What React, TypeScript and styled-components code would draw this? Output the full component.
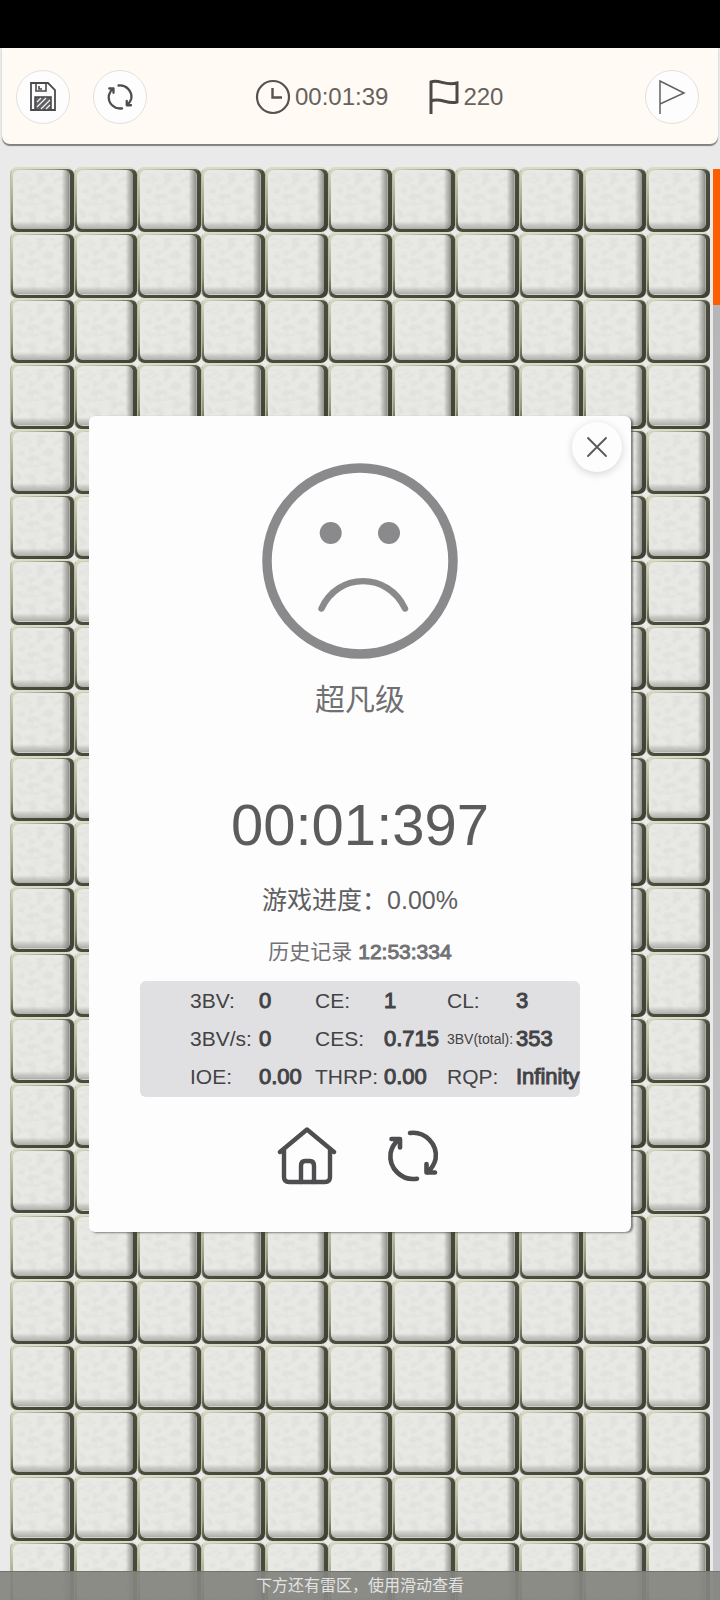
import React from 'react';
import styled, { createGlobalStyle } from 'styled-components';

const COLUMNS = 11;
const ROWS = 22;

const GlobalStyle = createGlobalStyle`
  *, *::before, *::after { box-sizing: border-box; }
  body {
    margin: 0;
    background: #eaeaec;
    font-family: "Liberation Sans", "Noto Sans CJK SC", sans-serif;
  }
  button { font: inherit; color: inherit; cursor: pointer; }
`;

const Screen = styled.div`
  position: relative;
  display: flex;
  flex-direction: column;
  height: 100vh;
  overflow: hidden;
  background: #eaeaea;
`;

const StatusBar = styled.div`
  flex: none;
  height: 48px;
  background: #000;
`;

const Header = styled.header`
  flex: none;
  display: flex;
  align-items: center;
  height: 96px;
  margin: 0 2px;
  padding: 2px 19px 0 14px;
  border-radius: 0 0 8px 8px;
  background: #fffbf4;
  box-shadow: 0 2px 1px #80807c;
`;

const HeaderSide = styled.div<{ $end?: boolean }>`
  flex: ${(p) => (p.$end ? 9 : 11)} 0 0;
  display: flex;
  gap: 23px;
  justify-content: ${(p) => (p.$end ? 'flex-end' : 'flex-start')};
`;

const HeaderStats = styled.div`
  display: flex;
  align-items: center;
  gap: 40px;
`;

const HeaderStat = styled.div`
  display: flex;
  align-items: center;
  gap: 4px;
  font-size: 24px;
  line-height: 36px;
  color: #65625f;
`;

const RoundButton = styled.button<{ $size: number; $raised?: boolean }>`
  display: flex;
  align-items: center;
  justify-content: center;
  width: ${(p) => p.$size}px;
  height: ${(p) => p.$size}px;
  padding: 0;
  border: ${(p) => (p.$raised ? 'none' : '1px solid #e3e1dd')};
  border-radius: 50%;
  background: #fdfdfe;
  box-shadow: ${(p) => (p.$raised ? '0 2px 8px rgba(0, 0, 0, 0.16)' : 'none')};
`;

const Board = styled.main`
  flex: 1;
  display: flex;
  min-height: 0;
  padding: 23px 0 0 10px;
  overflow: hidden;
`;

const Grid = styled.div`
  flex: 1;
  align-self: flex-start;
  display: grid;
  grid-template-columns: repeat(${COLUMNS}, 1fr);
`;

const Tile = styled.button`
  display: flex;
  aspect-ratio: 36 / 37;
  min-width: 0;
  padding: 1px 4px 3px 2px;
  border: 0;
  border-top: 2px solid #dadac8;
  border-left: 1px solid #b9b9a0;
  border-radius: 7px;
  background: linear-gradient(135deg, #dcdcc4 0%, #96967c 35%, #4b4d3f 50%, #3f4136 100%);
`;

const TileFace = styled.span`
  flex: 1;
  display: flex;
  overflow: hidden;
  border-radius: 6px;
  background: #e8e9e5;
`;

const TileTexture = styled.svg`
  width: 100%;
  height: 100%;
`;

const ScrollTrack = styled.div`
  flex: none;
  width: 7px;
  margin: 2px 0 0 3px;
  background: linear-gradient(#b4b4b6, #c8c8cc);
`;

const ScrollThumb = styled.div`
  height: 136px;
  background: #ff5e00;
`;

const Hint = styled.footer`
  position: absolute;
  inset: auto 0 0 0;
  padding: 4px 0;
  border-top: 1px solid #737370;
  background: rgba(132, 132, 128, 0.93);
  color: #e2e2e0;
  font-size: 16px;
  line-height: 20px;
  text-align: center;
`;

const Overlay = styled.div`
  position: absolute;
  inset: 48px 0 0 0;
  display: flex;
  align-items: center;
  justify-content: center;
`;

const Dialog = styled.section`
  position: relative;
  display: flex;
  flex-direction: column;
  align-items: center;
  width: calc(100% - 178px);
  padding: 47px 51px 46px;
  border-radius: 6px;
  background: #fdfdfe;
  box-shadow: 2px 1px 2px rgba(60, 60, 60, 0.6);
`;

const CloseSlot = styled.div`
  position: absolute;
  top: 6px;
  right: 9px;
`;

const Level = styled.h1`
  margin: 23px 0 0;
  font-size: 30px;
  font-weight: 400;
  line-height: 36px;
  color: #707072;
`;

const FinalTime = styled.p`
  margin: 75px 0 0;
  font-size: 58px;
  line-height: 64px;
  color: #5c5c5d;
`;

const Progress = styled.p`
  margin: 25px 0 0;
  font-size: 25px;
  line-height: 36px;
  color: #5f5f60;
`;

const History = styled.p`
  margin: 20px 0 0;
  font-size: 21px;
  line-height: 28px;
  color: #727274;
`;

const Strong = styled.b`
  font-weight: 400;
  -webkit-text-stroke: 1px currentColor;
`;

const StatsPanel = styled.div`
  align-self: stretch;
  margin-top: 15px;
  padding: 1px 0 1px 50px;
  border-radius: 6px;
  background: #e0e0e2;
`;

const StatsTable = styled.table`
  width: 100%;
  table-layout: fixed;
  border-collapse: collapse;
  white-space: nowrap;
  text-align: left;
  color: #434345;
`;

const LabelCell = styled.th<{ $small?: boolean }>`
  height: 38px;
  padding: 0;
  font-size: ${(p) => (p.$small ? 14 : 21)}px;
  font-weight: 400;
  line-height: 24px;
`;

const ValueCell = styled.td`
  height: 38px;
  padding: 0;
  font-size: 22px;
  line-height: 24px;
`;

const Actions = styled.div`
  display: flex;
  gap: 46px;
  margin-top: 29px;
`;

const ActionButton = styled.button`
  display: flex;
  padding: 0;
  border: 0;
  background: none;
`;

const stats = [
  [['3BV:', '0'], ['CE:', '1'], ['CL:', '3']],
  [['3BV/s:', '0'], ['CES:', '0.715'], ['3BV(total):', '353']],
  [['IOE:', '0.00'], ['THRP:', '0.00'], ['RQP:', 'Infinity']],
];

const SaveIcon = () => (
  <svg width="26" height="30" viewBox="0 0 26 30" fill="none" stroke="#4b4b4d" strokeWidth="1.8">
    <path d="M1 1H18L25 8V28H1Z" />
    <path d="M6 1V9H16V1M9 4V7H12" strokeWidth="1.6" />
    <rect x="5" y="15" width="16" height="13" fill="#626264" strokeWidth="1.6" />
    <path d="M7 20L11 16M7 25L16 16M11 27L20 18M16 27L20 23" stroke="#f4f4f4" strokeWidth="1.2" />
  </svg>
);

const RestartIcon = ({ size }: { size: number }) => (
  <svg width={size} height={size} viewBox="0 0 60 60" fill="none" stroke="#4e4e50" strokeWidth="4.6" strokeLinecap="round" strokeLinejoin="round">
    <path d="M27 7A22.900 22.900 0 0 1 52.600 33Q51 40 44.500 46.500M43.500 38V46.500H52" />
    <path d="M34 52.700A22.900 22.900 0 0 1 7.600 27Q9 19.500 15.500 13.500M8.500 13H17V21.500" />
  </svg>
);

const ClockIcon = () => (
  <svg width="36" height="36" viewBox="0 0 36 36" fill="none" stroke="#55524f" strokeWidth="2.2">
    <circle cx="18" cy="18" r="16" />
    <path d="M17.500 9V18.500H27" strokeWidth="2.4" />
  </svg>
);

const FlagIcon = () => (
  <svg width="31" height="36" viewBox="0 0 31 36" fill="none" stroke="#4c4946" strokeWidth="3">
    <path d="M3 35V3C11 0 17 7 29 4V23C19 26 13 18 3 22" />
  </svg>
);

const PennantIcon = () => (
  <svg width="28" height="36" viewBox="0 0 28 36" fill="none" stroke="#626264" strokeWidth="1.5">
    <path d="M2 35V2L26 14L2 25" />
  </svg>
);

const CloseIcon = () => (
  <svg width="24" height="24" viewBox="0 0 24 24" stroke="#58585a" strokeWidth="1.8" strokeLinecap="round">
    <path d="M3 3L21 21M21 3L3 21" />
  </svg>
);

const SadFace = () => (
  <svg width="196" height="196" viewBox="0 0 196 196" fill="none" stroke="#8a8a8c" aria-hidden="true">
    <circle cx="98" cy="98" r="93" strokeWidth="9.500" />
    <g fill="#8a8a8c" stroke="none">
      <circle cx="68.700" cy="70" r="11" />
      <circle cx="127" cy="70" r="11" />
    </g>
    <path d="M59.500 145.500C76 109 126 109 143 145.500" strokeWidth="6.400" strokeLinecap="round" />
  </svg>
);

const HomeIcon = () => (
  <svg width="60" height="60" viewBox="0 0 60 60" fill="none" stroke="#4e4e50" strokeWidth="4.4" strokeLinecap="round" strokeLinejoin="round">
    <path d="M3 26L30 3.500L57 26M7 23V51Q7 56 12 56H48Q53 56 53 51V23" />
    <path d="M24 56V40Q24 35 28 35H33Q37 35 37 40V56" />
  </svg>
);

const StoneDefs = () => (
  <svg width="0" height="0" style={{ position: 'absolute' }} aria-hidden="true">
    <defs>
      <filter id="stone" x="0" y="0" width="100%" height="100%">
        <feTurbulence type="fractalNoise" baseFrequency="0.12 0.17" numOctaves={2} seed={4} />
        <feColorMatrix values="0 0 0 0 0.72  0 0 0 0 0.73  0 0 0 0 0.71  4 0 0 0 -1.7" />
      </filter>
      <linearGradient id="shadeRight" x1="0" x2="1" y1="0" y2="0">
        <stop offset="0.86" stopColor="#70716a" stopOpacity="0" />
        <stop offset="1" stopColor="#70716a" stopOpacity="0.8" />
      </linearGradient>
      <linearGradient id="shadeBottom" x1="0" x2="0" y1="0" y2="1">
        <stop offset="0.86" stopColor="#77786f" stopOpacity="0" />
        <stop offset="1" stopColor="#77786f" stopOpacity="0.55" />
      </linearGradient>
    </defs>
  </svg>
);

const Stone = () => (
  <Tile aria-label="未翻开">
    <TileFace>
      <TileTexture viewBox="0 0 58 58" preserveAspectRatio="none">
        <rect x="3" y="3" width="51" height="51" filter="url(#stone)" opacity="0.6" />
        <rect width="58" height="58" fill="url(#shadeRight)" />
        <rect width="58" height="58" fill="url(#shadeBottom)" />
      </TileTexture>
    </TileFace>
  </Tile>
);

export default function App() {
  return (
    <Screen>
      <GlobalStyle />
      <StoneDefs />
      <StatusBar />
      <Header>
        <HeaderSide>
          <RoundButton $size={54} aria-label="保存"><SaveIcon /></RoundButton>
          <RoundButton $size={54} aria-label="重新开始"><RestartIcon size={30} /></RoundButton>
        </HeaderSide>
        <HeaderStats>
          <HeaderStat><ClockIcon />00:01:39</HeaderStat>
          <HeaderStat><FlagIcon />220</HeaderStat>
        </HeaderStats>
        <HeaderSide $end>
          <RoundButton $size={54} aria-label="插旗"><PennantIcon /></RoundButton>
        </HeaderSide>
      </Header>
      <Board>
        <Grid>
          {Array.from({ length: COLUMNS * ROWS }, (_, i) => <Stone key={i} />)}
        </Grid>
        <ScrollTrack><ScrollThumb /></ScrollTrack>
      </Board>
      <Hint>下方还有雷区，使用滑动查看</Hint>
      <Overlay>
        <Dialog role="dialog" aria-labelledby="level">
          <CloseSlot>
            <RoundButton $size={50} $raised aria-label="关闭"><CloseIcon /></RoundButton>
          </CloseSlot>
          <SadFace />
          <Level id="level">超凡级</Level>
          <FinalTime>00:01:397</FinalTime>
          <Progress>游戏进度：0.00%</Progress>
          <History>历史记录 <Strong>12:53:334</Strong></History>
          <StatsPanel>
            <StatsTable>
              <colgroup>
                <col width="69" /><col width="56" />
                <col width="69" /><col width="63" />
                <col width="69" /><col />
              </colgroup>
              <tbody>
                {stats.map((row) => (
                  <tr key={row[0][0]}>
                    {row.map(([label, value]) => (
                      <React.Fragment key={label}>
                        <LabelCell scope="row" $small={label.length > 8}>{label}</LabelCell>
                        <ValueCell><Strong>{value}</Strong></ValueCell>
                      </React.Fragment>
                    ))}
                  </tr>
                ))}
              </tbody>
            </StatsTable>
          </StatsPanel>
          <Actions>
            <ActionButton aria-label="主页"><HomeIcon /></ActionButton>
            <ActionButton aria-label="再来一局"><RestartIcon size={60} /></ActionButton>
          </Actions>
        </Dialog>
      </Overlay>
    </Screen>
  );
}
